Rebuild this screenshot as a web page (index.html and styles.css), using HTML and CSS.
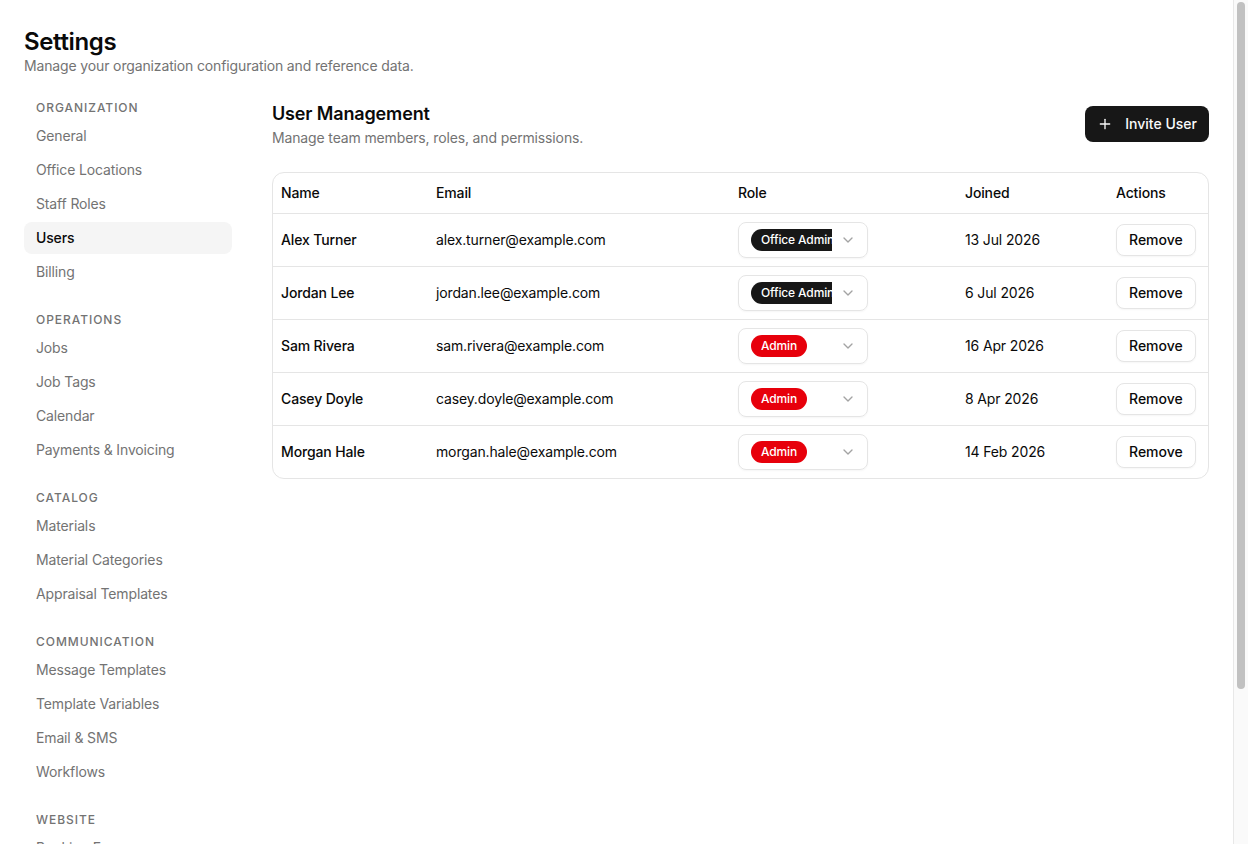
FILE: index.html
```html
<!doctype html>
<html lang="en">
<head>
  <meta charset="UTF-8">
  <meta name="viewport" content="width=device-width, initial-scale=1">
  <title>Settings</title>

  <link rel="stylesheet" href="styles.css">
</head>
<body>

<div class="frame">
<div class="scroller" id="scroller">
<div class="page">
  <header class="page-head">
    <h1>Settings</h1>
    <p>Manage your organization configuration and reference data.</p>
  </header>

  <div class="layout">
    <nav class="sidebar">
      <div class="nav-group">
        <h2>Organization</h2>
        <a href="#">General</a>
        <a href="#">Office Locations</a>
        <a href="#">Staff Roles</a>
        <a href="#" class="active">Users</a>
        <a href="#">Billing</a>
      </div>

      <div class="nav-group">
        <h2>Operations</h2>
        <a href="#">Jobs</a>
        <a href="#">Job Tags</a>
        <a href="#">Calendar</a>
        <a href="#">Payments &amp; Invoicing</a>
      </div>

      <div class="nav-group">
        <h2>Catalog</h2>
        <a href="#">Materials</a>
        <a href="#">Material Categories</a>
        <a href="#">Appraisal Templates</a>
      </div>

      <div class="nav-group">
        <h2>Communication</h2>
        <a href="#">Message Templates</a>
        <a href="#">Template Variables</a>
        <a href="#">Email &amp; SMS</a>
        <a href="#">Workflows</a>
      </div>

      <div class="nav-group">
        <h2>Website</h2>
        <a href="#">Booking Form</a>
        <a href="#">Service Areas</a>
        <a href="#">Reviews</a>
        <a href="#">Domain</a>
        <a href="#">Embed Code</a>
      </div>
    </nav>

    <main class="content">
      <div class="section-head">
        <div>
          <h2>User Management</h2>
          <p>Manage team members, roles, and permissions.</p>
        </div>
        <button class="btn-primary" type="button">
          <svg width="16" height="16" viewBox="0 0 24 24" fill="none" stroke="currentColor" stroke-width="2" stroke-linecap="round" stroke-linejoin="round"><path d="M5 12h14"/><path d="M12 5v14"/></svg>
          Invite User
        </button>
      </div>

      <div class="table-wrap">
        <table class="users">
          <colgroup>
            <col style="width: 155px">
            <col style="width: 302px">
            <col style="width: 227px">
            <col style="width: 151px">
            <col>
          </colgroup>
          <thead>
            <tr>
              <th>Name</th>
              <th>Email</th>
              <th>Role</th>
              <th>Joined</th>
              <th>Actions</th>
            </tr>
          </thead>
          <tbody id="rows"></tbody>
        </table>
      </div>
    </main>
  </div>
</div>
</div>

<div class="scrollbar">
  <div class="thumb" id="thumb"></div>
</div>
</div>

<script>
    const users = [
        {name: 'Alex Turner', email: 'alex.turner@example.com', role: 'Office Admin', joined: '13 Jul 2026'},
        {name: 'Jordan Lee', email: 'jordan.lee@example.com', role: 'Office Admin', joined: '6 Jul 2026'},
        {name: 'Sam Rivera', email: 'sam.rivera@example.com', role: 'Admin', joined: '16 Apr 2026'},
        {name: 'Casey Doyle', email: 'casey.doyle@example.com', role: 'Admin', joined: '8 Apr 2026'},
        {name: 'Morgan Hale', email: 'morgan.hale@example.com', role: 'Admin', joined: '14 Feb 2026'},
    ];

    const chevron = '<svg width="16" height="16" viewBox="0 0 24 24" fill="none" stroke="currentColor" stroke-width="2" stroke-linecap="round" stroke-linejoin="round"><path d="m6 9 6 6 6-6"/></svg>';

    const rows = document.getElementById('rows');

    users.forEach(u => {
        const badgeClass = u.role === 'Admin' ? 'badge admin' : 'badge office';
        const tr = document.createElement('tr');
        tr.innerHTML = `
            <td class="name">${u.name}</td>
            <td>${u.email}</td>
            <td>
              <div class="role-select">
                <span class="role-value"><span class="${badgeClass}">${u.role}</span></span>
                <span class="chevron">${chevron}</span>
              </div>
            </td>
            <td>${u.joined}</td>
            <td><button class="btn-outline" type="button">Remove</button></td>`;
        rows.appendChild(tr);
    });

    // size and move the scrollbar thumb to follow the page
    const scroller = document.getElementById('scroller');
    const thumb = document.getElementById('thumb');

    function updateThumb() {
        const track = scroller.clientHeight - 4;
        const ratio = scroller.clientHeight / scroller.scrollHeight;
        thumb.style.height = Math.round(track * ratio) + 'px';
        thumb.style.marginTop = Math.round(scroller.scrollTop * (track / scroller.scrollHeight)) + 'px';
    }

    scroller.addEventListener('scroll', updateThumb);
    window.addEventListener('resize', updateThumb);
    updateThumb();
</script>

</body>
</html>
```

FILE: styles.css
```css
* {
    margin: 0;
    padding: 0;
    box-sizing: border-box;
}

html, body {
    height: 100%;
    overflow: hidden;
}

body {
    font-family: Inter, "Liberation Sans", sans-serif;
    color: #0a0a0a;
    background-color: #fff;
    font-size: 14px;
    line-height: 20px;
    letter-spacing: -0.01em;
}

.frame {
    height: 100%;
    display: flex;
}

.scroller {
    flex: 1;
    min-width: 0;
    overflow-y: auto;
    scrollbar-width: none;
}

.scroller::-webkit-scrollbar {
    display: none;
}

.scrollbar {
    width: 15px;
    flex-shrink: 0;
    background-color: #fafafa;
    border-left: 1px solid #e8e8e8;
    padding: 2px 3px 2px 3px;
}

.scrollbar .thumb {
    width: 8px;
    border-radius: 4px;
    background-color: #c1c1c1;
}

.page {
    padding: 24px 24px 32px;
}

.page-head h1 {
    font-size: 24px;
    line-height: 32px;
    font-weight: 600;
    letter-spacing: -0.015em;
    margin-top: 2px;
    margin-bottom: -2px;
}

.page-head p {
    color: #737373;
}

.layout {
    margin-top: 24px;
    display: flex;
    gap: 40px;
    align-items: flex-start;
}

/* left navigation */

.sidebar {
    width: 208px;
    flex-shrink: 0;
    display: flex;
    flex-direction: column;
    gap: 24px;
}

.nav-group {
    display: flex;
    flex-direction: column;
    gap: 2px;
}

.nav-group h2 {
    font-size: 12px;
    line-height: 16px;
    font-weight: 500;
    text-transform: uppercase;
    letter-spacing: 0.08em;
    color: #737373;
    padding: 0 12px;
    margin-bottom: 2px;
}

.nav-group a {
    display: flex;
    align-items: center;
    height: 32px;
    padding: 0 12px;
    border-radius: 8px;
    color: #737373;
    text-decoration: none;
}

.nav-group a.active {
    background-color: #f5f5f5;
    color: #0a0a0a;
    font-weight: 500;
}

/* main panel */

.content {
    flex: 1;
    min-width: 0;
}

.section-head {
    display: flex;
    justify-content: space-between;
    align-items: flex-start;
}

.section-head h2 {
    font-size: 18px;
    line-height: 28px;
    font-weight: 600;
}

.section-head p {
    color: #737373;
}

.btn-primary {
    margin-top: 6px;
    height: 36px;
    padding: 0 12px;
    display: flex;
    align-items: center;
    gap: 12px;
    border: none;
    border-radius: 8px;
    background-color: #171717;
    color: #fafafa;
    font: inherit;
    font-weight: 500;
    cursor: pointer;
}

.table-wrap {
    margin-top: 24px;
    border: 1px solid #e5e5e5;
    border-radius: 12px;
    overflow: hidden;
}

.users {
    width: 100%;
    border-collapse: collapse;
    table-layout: fixed;
}

.users th {
    height: 40px;
    padding: 0 8px;
    text-align: left;
    font-weight: 500;
    border-bottom: 1px solid #e5e5e5;
}

.users td {
    height: 52px;
    padding: 8px;
    vertical-align: middle;
    white-space: nowrap;
}

.users tbody tr + tr td {
    border-top: 1px solid #e5e5e5;
}

.users td.name {
    font-weight: 500;
}

.role-select {
    width: 130px;
    height: 36px;
    display: flex;
    align-items: center;
    padding: 0 11px 0 12px;
    border: 1px solid #e5e5e5;
    border-radius: 8px;
    box-shadow: 0 1px 2px rgba(0, 0, 0, 0.04);
}

.role-value {
    flex: 1;
    min-width: 0;
    overflow: hidden;
    display: flex;
}

.badge {
    display: inline-flex;
    align-items: center;
    height: 22px;
    padding: 0 10px;
    border-radius: 999px;
    font-size: 12px;
    font-weight: 500;
    color: #fff;
    white-space: nowrap;
}

.badge.office {
    background-color: #171717;
    padding-right: 12px;
}

.badge.admin {
    background-color: #e7000b;
}

.chevron {
    display: flex;
    color: #a3a3a3;
    margin-left: 8px;
}

.btn-outline {
    height: 32px;
    padding: 0 12px;
    border: 1px solid #e5e5e5;
    border-radius: 8px;
    background-color: #fff;
    color: #0a0a0a;
    font: inherit;
    font-weight: 500;
    box-shadow: 0 1px 2px rgba(0, 0, 0, 0.04);
    cursor: pointer;
}
```
